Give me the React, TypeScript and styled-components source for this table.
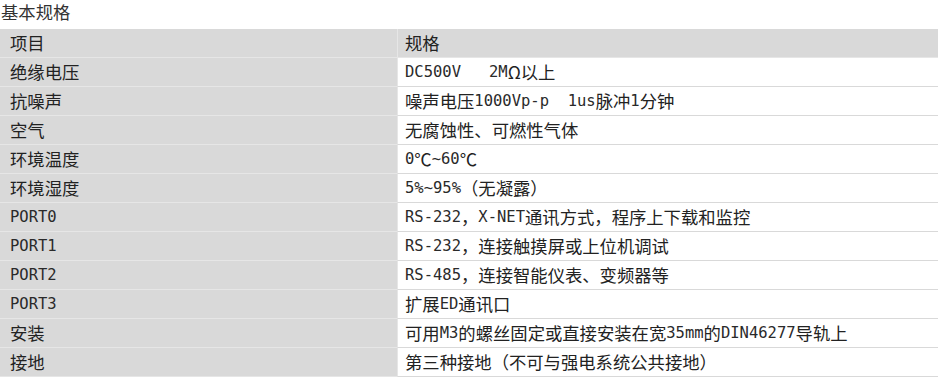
import React from "react";
import styled, { createGlobalStyle } from "styled-components";

const GlobalStyle = createGlobalStyle`
  html, body { margin: 0; padding: 0; background: #ffffff; }
  body {
    font-family: "Noto Sans CJK SC", sans-serif;
    color: #222222;
  }
`;

const Page = styled.div`
  width: 939px;
  display: flex;
  flex-direction: column;
`;

const Title = styled.div`
  height: 29px;
  box-sizing: border-box;
  padding: 0 0 0 1px;
  font-family: "Noto Sans CJK SC", sans-serif;
  font-size: 17.33px;
  line-height: 24px;
  color: #333333;
`;

const Table = styled.div`
  display: grid;
  grid-template-columns: 397px 541px;
  width: 938px;
`;

const Cell = styled.div<{ $head?: boolean; $right?: boolean }>`
  height: 29px;
  box-sizing: border-box;
  display: flex;
  align-items: center;
  padding-left: ${(p) => (p.$right ? "7px" : "10px")};
  padding-bottom: 1px;
  font-family: "Noto Sans CJK SC", sans-serif;
  font-size: 17.33px;
  white-space: pre;
  background: ${(p) => (p.$head || !p.$right ? "#d9d9d9" : "#ffffff")};
  border-bottom: 1px solid ${(p) => (p.$right && !p.$head ? "#d9d9d9" : "#e6e6e6")};
  border-left: ${(p) => (p.$right ? "1px solid #e6e6e6" : "none")};
`;

const Latin = styled.span`
  font-family: "DejaVu Sans Mono", "Liberation Mono", monospace;
  font-size: 15.5px;
  color: #2a2a2a;
`;

function Mixed({ text }: { text: string }) {
  const parts = text.match(/[\x20-\x7e]+|[^\x20-\x7e]+/g) || [];
  return (
    <>
      {parts.map((p, i) =>
        /^[\x20-\x7e]+$/.test(p) ? <Latin key={i}>{p}</Latin> : <span key={i}>{p}</span>
      )}
    </>
  );
}

const rows: [string, string][] = [
  ["绝缘电压", "DC500V   2MΩ以上"],
  ["抗噪声", "噪声电压1000Vp-p  1us脉冲1分钟"],
  ["空气", "无腐蚀性、可燃性气体"],
  ["环境温度", "0℃~60℃"],
  ["环境湿度", "5%~95%（无凝露）"],
  ["PORT0", "RS-232，X-NET通讯方式，程序上下载和监控"],
  ["PORT1", "RS-232，连接触摸屏或上位机调试"],
  ["PORT2", "RS-485，连接智能仪表、变频器等"],
  ["PORT3", "扩展ED通讯口"],
  ["安装", "可用M3的螺丝固定或直接安装在宽35mm的DIN46277导轨上"],
  ["接地", "第三种接地（不可与强电系统公共接地）"],
];

export default function App() {
  return (
    <Page>
      <GlobalStyle />
      <Title>基本规格</Title>
      <Table>
        <Cell $head>项目</Cell>
        <Cell $head $right>规格</Cell>
        {rows.map(([k, v]) => (
          <React.Fragment key={k}>
            <Cell><Mixed text={k} /></Cell>
            <Cell $right><Mixed text={v} /></Cell>
          </React.Fragment>
        ))}
      </Table>
    </Page>
  );
}
